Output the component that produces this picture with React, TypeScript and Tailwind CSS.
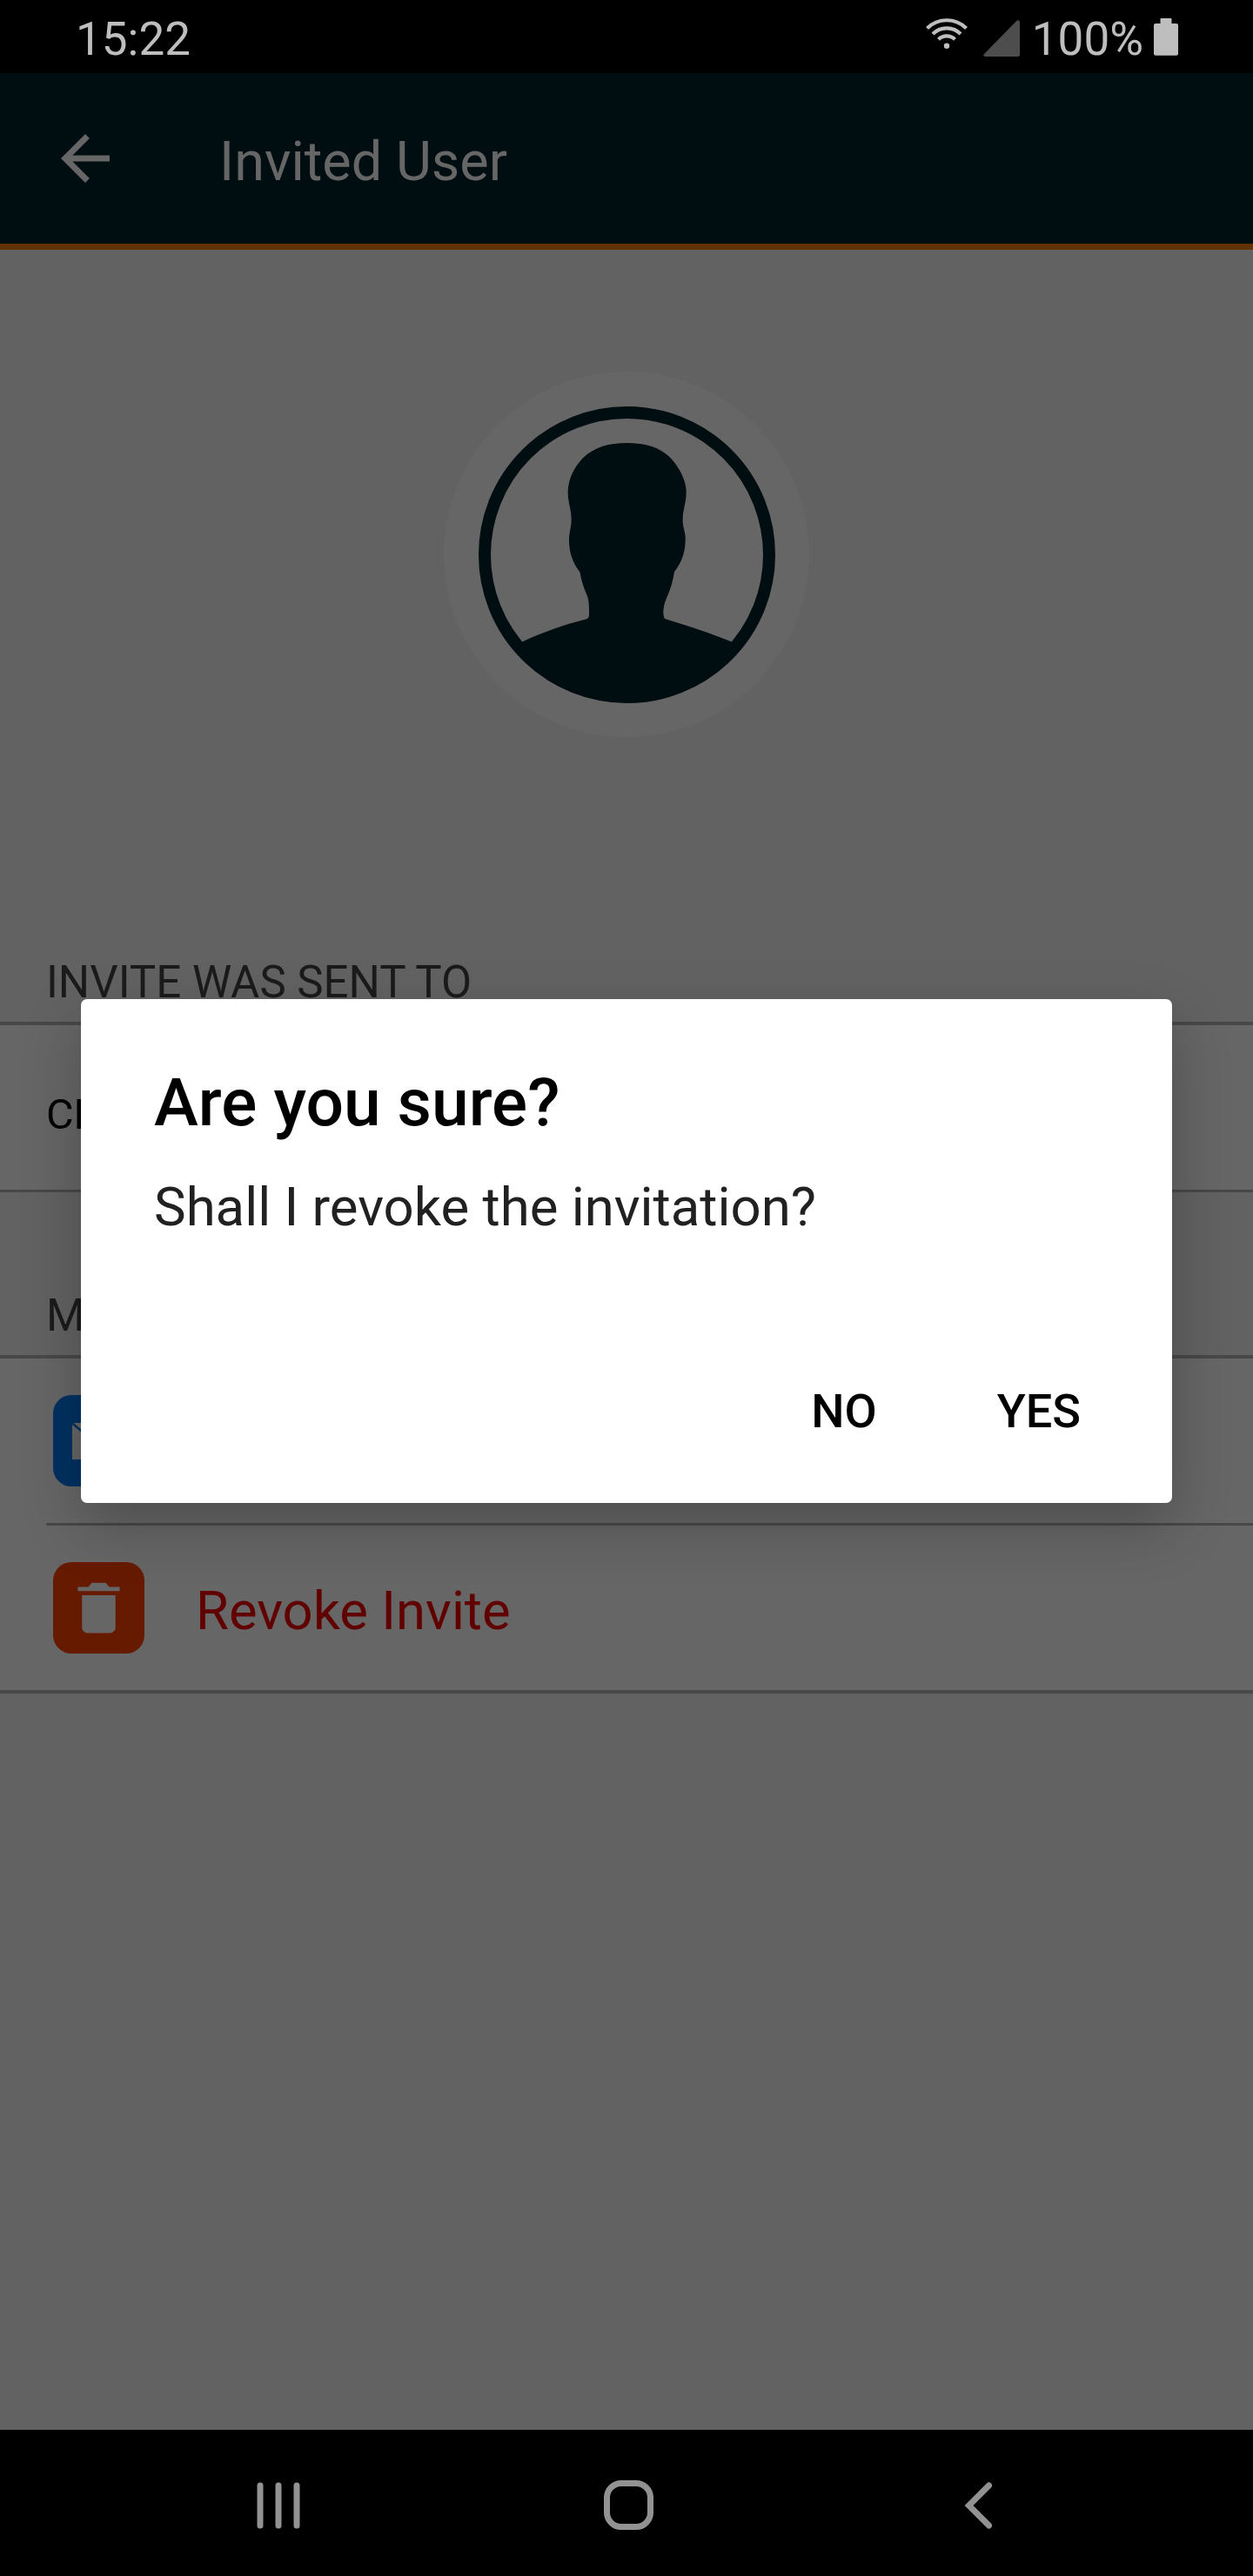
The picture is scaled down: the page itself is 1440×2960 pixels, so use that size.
import type { ReactNode } from "react";

function StatusBar() {
  return (
    <div className="flex h-[84px] items-start bg-black pl-[87px] pr-[86px] text-[53px] text-[#bebebe]">
      <span className="mt-[5px] leading-[80px]">15:22</span>
      <svg className="ml-auto mt-[21px] h-[36px] w-[48px]" viewBox="0 0 48 36" fill="none" stroke="#bebebe" strokeWidth="4.2">
        <path d="M1.5 11.5a32 32 0 0 1 45 0" />
        <path d="M8 18a22.5 22.5 0 0 1 32 0" />
        <path d="M14.5 24.3a13.5 13.5 0 0 1 19 0" />
        <circle cx="24" cy="31.7" r="3.2" fill="#bebebe" stroke="none" />
      </svg>
      <svg className="ml-[18px] mt-[23px] h-[42px] w-[42px]" viewBox="0 0 42 42" fill="#4d4d4d">
        <path d="M1 39 38.500.8Q42-1 42 3V39.500Q42 42 39.500 42H2.500Q-1 41.500 1 39Z" />
      </svg>
      <span className="ml-[14px] mt-[5px] leading-[80px]">100%</span>
      <svg className="ml-[12px] mt-[21px] h-[43px] w-[28px]" viewBox="0 0 28 43" fill="#bebebe">
        <rect x="7.500" width="13" height="10" rx="1" />
        <rect y="6" width="28" height="36.800" rx="2" />
      </svg>
    </div>
  );
}

function Header() {
  return (
    <header className="flex h-[203px] items-center border-b-[7px] border-[#603300] bg-[#000d11] pl-[56px]">
      <svg className="size-[84px]" viewBox="0 0 24 24" fill="#666666">
        <path d="M20 11H7.830l5.590-5.590L12 4l-8 8 8 8 1.410-1.410L7.830 13H20v-2z" />
      </svg>
      <h1 className="ml-[112px] mt-[7px] text-[63px] leading-[80px] text-[#666666]">Invited User</h1>
    </header>
  );
}

function Avatar() {
  return (
    <div className="mx-auto size-[420px] rounded-full bg-[#666666]">
      <svg className="size-full" viewBox="60 51 1260 1260" fill="#000d11">
        <circle cx="691.500" cy="682.500" r="490.500" fill="none" stroke="#000d11" strokeWidth="42" />
        <path d="M332 982C400 950 480 922 553 904Q561 901 561 888C562 865 560 835 554 823C542 795 534 770 529 742C502 706 491 670 492 626C494 600 500 585 500 562C500 525 487 500 488 462C490 420 510 380 540 349C580 310 630 297 692 297C755 297 805 312 842 349C870 378 895 425 896 462C897 500 884 525 884 562C883 585 892 600 893 622C894 670 882 706 855 741C850 770 844 795 833 820C820 850 815 870 818 892Q819 902 824 904C900 927 980 953 1051 982L1075 1008C990 1110 870 1180 692 1193C510 1180 390 1110 305 1008Z" />
      </svg>
    </div>
  );
}

function SectionTitle({ children }: { children: ReactNode }) {
  return <h2 className="pl-[53px] text-[51px] leading-[60px] text-[#1b1b1b]">{children}</h2>;
}

function Tile({ className, children }: { className: string; children: ReactNode }) {
  return <span className={`flex size-[105px] items-center justify-center rounded-[21px] ${className}`}>{children}</span>;
}

function Dialog() {
  return (
    <div className="absolute left-[93px] top-[1148px] flex h-[579px] w-[1254px] flex-col rounded-[7px] bg-white px-[84px] shadow-[0_26px_68px_0_rgba(0,0,0,0.24)]">
      <h2 className="mt-[69px] text-[76.700px] font-medium leading-[100px] text-black">Are you sure?</h2>
      <p className="mt-[30px] text-[61.700px] leading-[80px] text-[#212121]">Shall I revoke the invitation?</p>
      <div className="mt-auto flex justify-end gap-[138px] pb-[75px] pr-[21px] text-[54px] font-medium leading-[60px] text-black">
        <button>NO</button>
        <button>YES</button>
      </div>
    </div>
  );
}

export default function App() {
  return (
    <div className="relative flex h-[2960px] w-[1440px] flex-col overflow-hidden bg-[#626262] font-[Roboto,sans-serif]">
      <StatusBar />
      <Header />
      <main className="flex-1 pt-[140px]">
        <Avatar />
        <section className="mt-[252px]">
          <SectionTitle>INVITE WAS SENT TO</SectionTitle>
          <div className="mt-[15px] flex h-[196px] items-center border-b-[3px] border-t-[4px] border-[#484848] bg-[#666666] pl-[53px]">
            <span className="mt-[16px] text-[48.500px] leading-[60px] text-black">CH</span>
          </div>
        </section>
        <section className="mt-[112px]">
          <SectionTitle>M</SectionTitle>
          <div className="mt-[15px] border-y-[4px] border-[#484848] bg-[#666666]">
            <div className="ml-[53px] flex h-[192px] items-center border-b-[3px] border-[#484848] pl-[8px]">
              <Tile className="bg-[#003161]">
                <svg className="h-[42px] w-[61px]" viewBox="0 0 61 42" fill="#666666">
                  <path d="M1.500 0h58L30.500 24z" />
                  <path d="M0 2v40h61V2L30.500 28z" />
                </svg>
              </Tile>
            </div>
            <div className="flex h-[189px] items-center pl-[61px]">
              <Tile className="bg-[#661a00]">
                <svg className="size-[77px]" viewBox="0 0 512 512" fill="#666666">
                  <path d="M128 405.429C128 428.846 147.198 448 170.667 448h170.667C364.802 448 384 428.846 384 405.429V160H128v245.429zM416 96h-80l-26.785-32H202.786L176 96H96v32h320V96z" />
                </svg>
              </Tile>
              <span className="ml-[59px] mt-[7px] text-[61.600px] leading-[80px] text-[#610000]">Revoke Invite</span>
            </div>
          </div>
        </section>
      </main>
      <nav className="flex h-[168px] items-center bg-black pl-[295px] pr-[299px] pt-[5px]">
        <svg className="h-[54px] w-[50px]" viewBox="0 0 50 54" fill="#929292">
          <rect x=".5" y=".5" width="7" height="53" rx="3.500" />
          <rect x="21.500" y=".5" width="7" height="53" rx="3.500" />
          <rect x="42.500" y=".5" width="7" height="53" rx="3.500" />
        </svg>
        <span className="ml-[349px] size-[57px] rounded-[20px] border-[7px] border-[#929292]" />
        <svg className="ml-auto h-[54px] w-[33px]" viewBox="0 0 33 54" fill="none" stroke="#929292" strokeWidth="7" strokeLinecap="round">
          <path d="M28.500 4 5.500 27l23 23" />
        </svg>
      </nav>
      <Dialog />
    </div>
  );
}
